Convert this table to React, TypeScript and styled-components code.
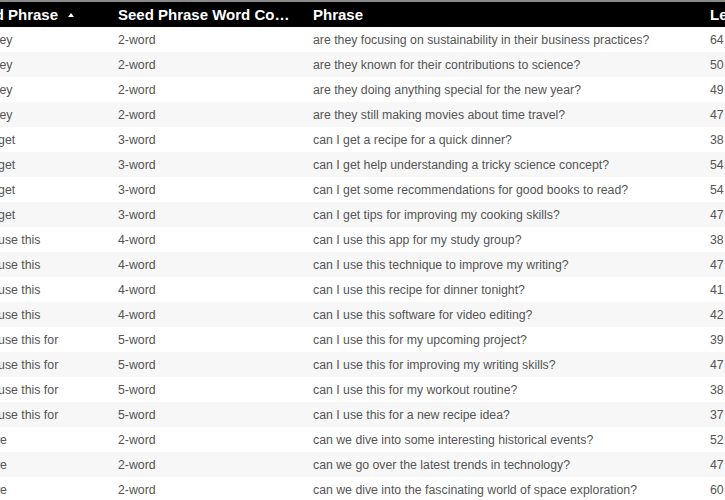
import React, { useLayoutEffect, useRef } from "react";
import styled, { createGlobalStyle } from "styled-components";

const Global = createGlobalStyle`
  html, body { margin: 0; padding: 0; background: #fff; }
  body { font-family: "Liberation Sans", Arial, sans-serif; }
`;

const Viewport = styled.div`
  width: 725px;
  height: 500px;
  overflow: hidden;
  border-top: 2px solid #8a8a8a;
  box-sizing: border-box;
  background: #fff;
`;

const Table = styled.table`
  border-collapse: collapse;
  table-layout: fixed;
  width: 822px;
  font-family: "Liberation Sans", Arial, sans-serif;
`;

const HeadCell = styled.th`
  height: 25px;
  padding: 0 10px;
  background: #000;
  color: #fff;
  font-size: 15px;
  font-weight: 700;
  text-align: left;
  white-space: nowrap;
  overflow: hidden;
  text-overflow: ellipsis;
  box-sizing: border-box;
`;

const SortArrow = styled.span`
  display: inline-block;
  width: 0;
  height: 0;
  margin-left: 10px;
  vertical-align: 3px;
  border-left: 3px solid transparent;
  border-right: 3px solid transparent;
  border-bottom: 4px solid #fff;
`;

const Row = styled.tr<{ $alt: boolean }>`
  background: ${(p) => (p.$alt ? "#f7f7f7" : "#ffffff")};
`;

const Cell = styled.td`
  height: 25px;
  padding: 0 10px;
  font-size: 12.3px;
  color: #555;
  white-space: nowrap;
  overflow: hidden;
  text-overflow: ellipsis;
  box-sizing: border-box;
`;

type Item = { seed: string; count: string; phrase: string; len: number };

const rows: Item[] = [
  { seed: "are they", count: "2-word", phrase: "are they focusing on sustainability in their business practices?", len: 64 },
  { seed: "are they", count: "2-word", phrase: "are they known for their contributions to science?", len: 50 },
  { seed: "are they", count: "2-word", phrase: "are they doing anything special for the new year?", len: 49 },
  { seed: "are they", count: "2-word", phrase: "are they still making movies about time travel?", len: 47 },
  { seed: "can I get", count: "3-word", phrase: "can I get a recipe for a quick dinner?", len: 38 },
  { seed: "can I get", count: "3-word", phrase: "can I get help understanding a tricky science concept?", len: 54 },
  { seed: "can I get", count: "3-word", phrase: "can I get some recommendations for good books to read?", len: 54 },
  { seed: "can I get", count: "3-word", phrase: "can I get tips for improving my cooking skills?", len: 47 },
  { seed: "can I use this", count: "4-word", phrase: "can I use this app for my study group?", len: 38 },
  { seed: "can I use this", count: "4-word", phrase: "can I use this technique to improve my writing?", len: 47 },
  { seed: "can I use this", count: "4-word", phrase: "can I use this recipe for dinner tonight?", len: 41 },
  { seed: "can I use this", count: "4-word", phrase: "can I use this software for video editing?", len: 42 },
  { seed: "can I use this for", count: "5-word", phrase: "can I use this for my upcoming project?", len: 39 },
  { seed: "can I use this for", count: "5-word", phrase: "can I use this for improving my writing skills?", len: 47 },
  { seed: "can I use this for", count: "5-word", phrase: "can I use this for my workout routine?", len: 38 },
  { seed: "can I use this for", count: "5-word", phrase: "can I use this for a new recipe idea?", len: 37 },
  { seed: "can we", count: "2-word", phrase: "can we dive into some interesting historical events?", len: 52 },
  { seed: "can we", count: "2-word", phrase: "can we go over the latest trends in technology?", len: 47 },
  { seed: "can we", count: "2-word", phrase: "can we dive into the fascinating world of space exploration?", len: 60 },
];

export default function App() {
  const ref = useRef<HTMLDivElement>(null);
  useLayoutEffect(() => {
    if (ref.current) ref.current.scrollLeft = 42;
  }, []);
  return (
    <>
      <Global />
      <Viewport ref={ref}>
        <Table>
          <colgroup>
            <col style={{ width: 150 }} />
            <col style={{ width: 195 }} />
            <col style={{ width: 397 }} />
            <col style={{ width: 80 }} />
          </colgroup>
          <thead>
            <tr>
              <HeadCell>
                Seed Phrase
                <SortArrow />
              </HeadCell>
              <HeadCell>Seed Phrase Word Count</HeadCell>
              <HeadCell>Phrase</HeadCell>
              <HeadCell>Length</HeadCell>
            </tr>
          </thead>
          <tbody>
            {rows.map((r, i) => (
              <Row key={i} $alt={i % 2 === 1}>
                <Cell>{r.seed}</Cell>
                <Cell>{r.count}</Cell>
                <Cell>{r.phrase}</Cell>
                <Cell>{r.len}</Cell>
              </Row>
            ))}
          </tbody>
        </Table>
      </Viewport>
    </>
  );
}
